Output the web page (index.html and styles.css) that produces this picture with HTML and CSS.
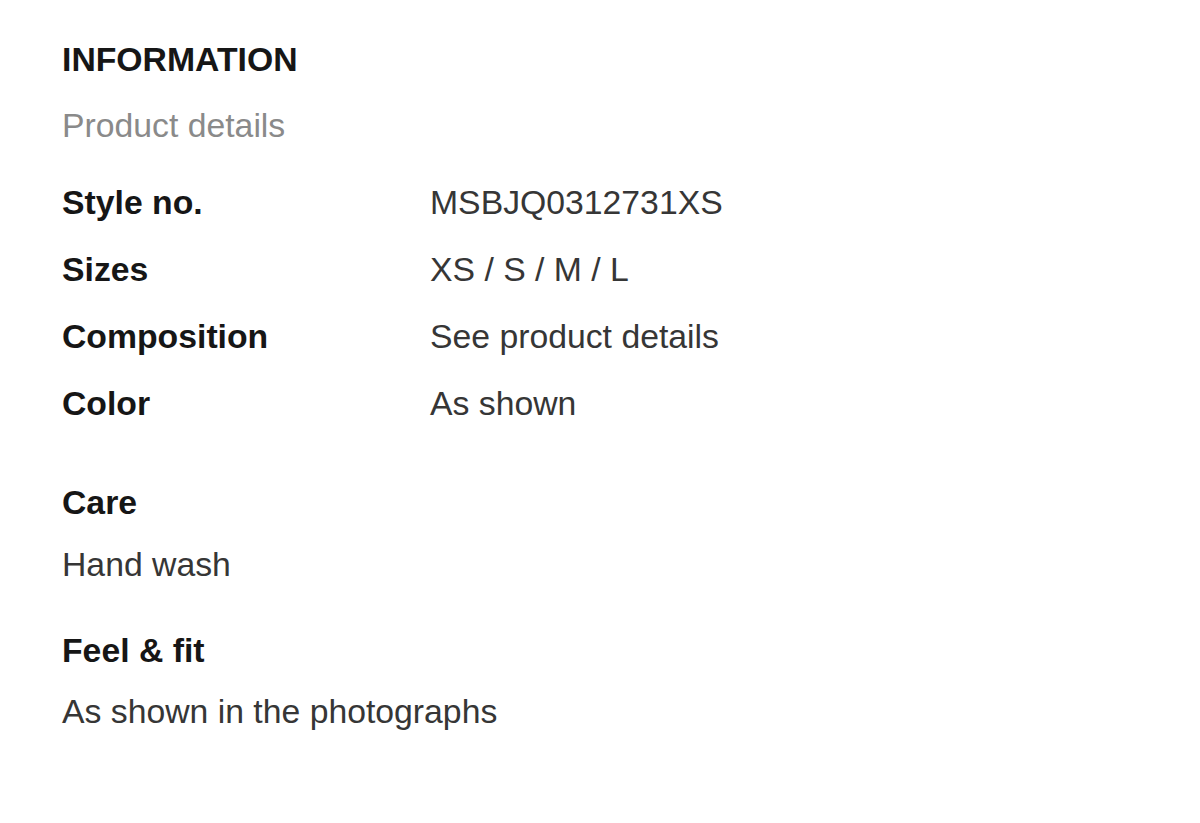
FILE: index.html
```html
<!DOCTYPE html>
<html lang="en">
<head>
<meta charset="utf-8">
<title>Information</title>
<link rel="stylesheet" href="styles.css">
</head>
<body>
<main class="info">
  <h1 class="info-title">INFORMATION</h1>
  <h2 class="info-subtitle">Product details</h2>
  <dl class="spec-list">
    <div class="spec-row"><dt>Style no.</dt><dd>MSBJQ0312731XS</dd></div>
    <div class="spec-row"><dt>Sizes</dt><dd>XS / S / M / L</dd></div>
    <div class="spec-row"><dt>Composition</dt><dd>See product details</dd></div>
    <div class="spec-row"><dt>Color</dt><dd>As shown</dd></div>
  </dl>
  <section class="block block-care">
    <h3 class="block-title">Care</h3>
    <p class="block-text">Hand wash</p>
  </section>
  <section class="block block-fit">
    <h3 class="block-title">Feel &amp; fit</h3>
    <p class="block-text">As shown in the photographs</p>
  </section>
</main>
</body>
</html>
```

FILE: styles.css
```css
html, body {
  margin: 0;
  padding: 0;
  background: #ffffff;
}

body {
  font-family: "Liberation Sans", Arial, sans-serif;
  font-size: 33.75px;
  line-height: 44px;
  color: #333333;
}

.info {
  padding: 37px 0 0 62px;
  display: flex;
  flex-direction: column;
}

.info-title {
  margin: 0;
  font-size: 33.75px;
  line-height: 44px;
  font-weight: 700;
  color: #161616;
}

.info-subtitle {
  margin: 22px 0 0;
  font-size: 33.75px;
  line-height: 44px;
  font-weight: 400;
  color: #8a8a8a;
}

.spec-list {
  margin: 33px 0 0;
  display: flex;
  flex-direction: column;
  gap: 23px;
}

.spec-row {
  display: grid;
  grid-template-columns: 368px 1fr;
}

.spec-row dt {
  font-weight: 700;
  color: #161616;
}

.spec-row dd {
  margin: 0;
  color: #363636;
}

.block {
  display: flex;
  flex-direction: column;
  gap: 18px;
}

.block-care {
  margin-top: 55px;
}

.block-fit {
  margin-top: 42px;
  gap: 17px;
}

.block-title {
  margin: 0;
  font-size: 33.75px;
  line-height: 44px;
  font-weight: 700;
  color: #161616;
}

.block-text {
  margin: 0;
  color: #363636;
}
```
